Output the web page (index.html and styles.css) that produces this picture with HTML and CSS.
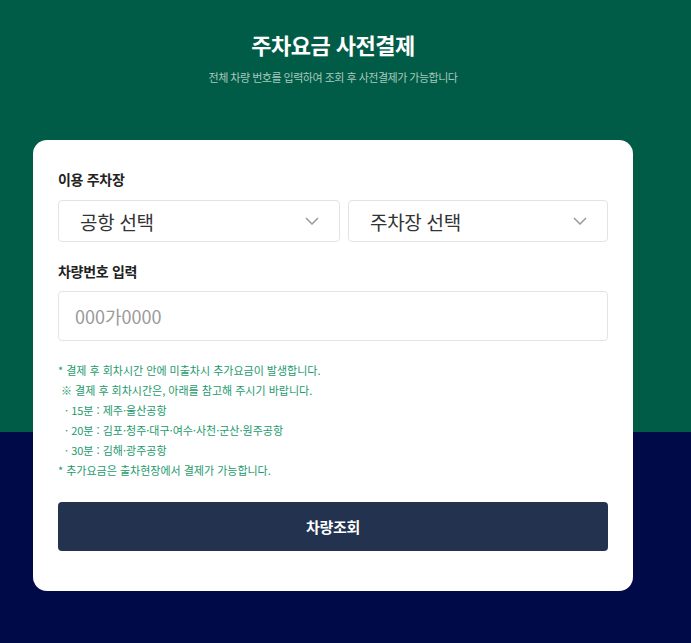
FILE: index.html
```html
<!DOCTYPE html>
<html lang="ko">
<head>
<meta charset="utf-8">
<title>주차요금 사전결제</title>
<link rel="stylesheet" href="styles.css">
</head>
<body>
<div class="page">
  <div class="wrap">
    <header class="head">
      <h1 class="title">주차요금 사전결제</h1>
      <p class="sub">전체 차량 번호를 입력하여 조회 후 사전결제가 가능합니다</p>
    </header>
    <section class="card">
      <h2 class="label">이용 주차장</h2>
      <div class="selects">
        <div class="select sel-air"><span>공항 선택</span>
          <svg class="chev" width="14" height="8" viewBox="0 0 14 8"><path d="M1 1l6 6 6-6" fill="none" stroke="#9a9a9a" stroke-width="1.5"/></svg>
        </div>
        <div class="select sel-lot"><span>주차장 선택</span>
          <svg class="chev" width="14" height="8" viewBox="0 0 14 8"><path d="M1 1l6 6 6-6" fill="none" stroke="#9a9a9a" stroke-width="1.5"/></svg>
        </div>
      </div>
      <h2 class="label label2">차량번호 입력</h2>
      <div class="input"><span class="ph">000가0000</span></div>
      <ul class="notes">
        <li>* 결제 후 회차시간 안에 미출차시 추가요금이 발생합니다.</li>
        <li class="ind1">※ 결제 후 회차시간은, 아래를 참고해 주시기 바랍니다.</li>
        <li class="ind2">· 15분 : 제주·울산공항</li>
        <li class="ind2">· 20분 : 김포·청주·대구·여수·사천·군산·원주공항</li>
        <li class="ind2">· 30분 : 김해·광주공항</li>
        <li>* 추가요금은 출차현장에서 결제가 가능합니다.</li>
      </ul>
      <button class="btn" type="button">차량조회</button>
    </section>
  </div>
</div>
</body>
</html>
```

FILE: styles.css
```css
* { box-sizing: border-box; margin: 0; padding: 0; }
html, body { height: 100%; }
body {
  font-family: "Noto Sans CJK KR", "Noto Sans", sans-serif;
  background: linear-gradient(to bottom, #015c47 0, #015c47 432px, #010a48 432px, #010a48 100%);
  min-height: 643px;
}
.page { padding-top: 27px; }
.wrap { width: 600px; margin-left: 33px; }
.head { text-align: center; }
.title {
  color: #fff;
  font-size: 22px;
  font-weight: 700;
  line-height: 34px;
  letter-spacing: -0.5px;
}
.sub {
  color: #a9c8bd;
  font-size: 11px;
  line-height: 16px;
  margin-top: 8px;
  letter-spacing: -0.5px;
}
.card {
  margin-top: 55px;
  background: #fff;
  border-radius: 14px;
  padding: 29px 25px 40px 25px;
  height: 451px;
}
.label {
  font-size: 14px;
  font-weight: 700;
  color: #222;
  line-height: 20px;
  letter-spacing: -0.3px;
}
.label2 { margin-top: 19px; }
.selects { display: flex; gap: 8px; margin-top: 11px; }
.select {
  height: 42px;
  border: 1px solid #e3e3e3;
  border-radius: 4px;
  display: flex;
  align-items: center;
  justify-content: space-between;
  padding: 0 20px 0 21px;
  font-size: 19px;
  color: #333;
  letter-spacing: -0.3px;
}
.sel-air { width: 282px; }
.sel-lot { width: 260px; }
.chev { display: block; }
.input {
  margin-top: 10px;
  height: 50px;
  border: 1px solid #e3e3e3;
  border-radius: 4px;
  display: flex;
  align-items: center;
  padding-left: 16px;
}
.ph { font-size: 18px; color: #9a9a9a; }
.notes {
  list-style: none;
  margin-top: 19px;
  color: #1d9a6c;
  font-size: 11px;
  line-height: 20px;
  letter-spacing: 0;
}
.ind1 { padding-left: 3px; }
.ind2 { padding-left: 7px; }
.btn {
  margin-top: 22px;
  width: 100%;
  height: 49px;
  border: 0;
  border-radius: 4px;
  background: #22324f;
  color: #fff;
  font-family: inherit;
  font-size: 15px;
  font-weight: 700;
  letter-spacing: -0.3px;
}
```
